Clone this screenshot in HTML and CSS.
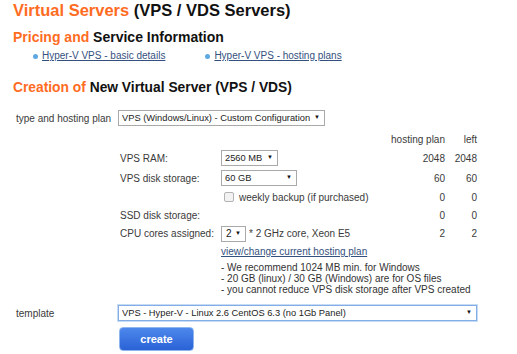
FILE: index.html
```html
<!DOCTYPE html>
<html lang="en">
<head>
    <meta charset="UTF-8">
    <meta name="viewport" content="width=device-width, initial-scale=1.0">
    <title>Virtual Servers</title>
    <link rel="stylesheet" href="styles.css">
</head>
<body>
    <h1 class="page-title"><span class="accent">Virtual Servers</span> (VPS / VDS Servers)</h1>

    <!-- Pricing links -->
    <h2 class="section-title"><span class="accent">Pricing and</span> Service Information</h2>
    <ul class="info-links">
        <li><a href="#">Hyper-V VPS - basic details</a></li>
        <li><a href="#">Hyper-V VPS - hosting plans</a></li>
    </ul>

    <!-- New server form -->
    <h2 class="section-title creation"><span class="accent">Creation of</span> New Virtual Server (VPS / VDS)</h2>

    <form class="vps-form">
        <div class="form-row">
            <label class="row-label" for="plan">type and hosting plan</label>
            <span class="select-wrap plan-select">
                <select id="plan"><option>VPS (Windows/Linux) - Custom Configuration</option></select>
            </span>
        </div>

        <div class="resources">
            <div class="res-row">
                <span></span><span></span>
                <span class="num">hosting plan</span>
                <span class="num">left</span>
            </div>
            <div class="res-row tall">
                <label for="ram">VPS RAM:</label>
                <span><span class="select-wrap ram-select"><select id="ram"><option>2560 MB</option></select></span></span>
                <span class="num">2048</span>
                <span class="num">2048</span>
            </div>
            <div class="res-row tall">
                <label for="disk">VPS disk storage:</label>
                <span><span class="select-wrap disk-select"><select id="disk"><option>60 GB</option></select></span></span>
                <span class="num">60</span>
                <span class="num">60</span>
            </div>
            <div class="res-row">
                <span></span>
                <label class="check"><input type="checkbox"> weekly backup (if purchased)</label>
                <span class="num">0</span>
                <span class="num">0</span>
            </div>
            <div class="res-row">
                <span>SSD disk storage:</span>
                <span></span>
                <span class="num">0</span>
                <span class="num">0</span>
            </div>
            <div class="res-row cpu">
                <label for="cpu">CPU cores assigned:</label>
                <span class="cpu-cell">
                    <span class="select-wrap cpu-select"><select id="cpu"><option>2</option></select></span>
                    <span class="cpu-note">* 2 GHz core, Xeon E5</span>
                </span>
                <span class="num">2</span>
                <span class="num">2</span>
            </div>

            <div class="plan-link"><a href="#">view/change current hosting plan</a></div>
            <div class="notes">
                - We recommend 1024 MB min. for Windows<br>
                - 20 GB (linux) / 30 GB (Windows) are for OS files<br>
                - you cannot reduce VPS disk storage after VPS created
            </div>
        </div>

        <div class="form-row template-row">
            <label class="row-label" for="template">template</label>
            <span class="select-wrap template-select">
                <select id="template"><option>VPS - Hyper-V - Linux 2.6 CentOS 6.3 (no 1Gb Panel)</option></select>
            </span>
        </div>

        <button type="submit" class="create-btn">create</button>
    </form>
</body>
</html>
```

FILE: styles.css
```css
/* Page basics */
body {
    margin: 0;
    padding: 0 13px;
    font-family: "Liberation Sans", Arial, sans-serif;
    font-size: 10px;
    color: #3a3a3a;
    background-color: #fff;
}

.accent {
    color: #ff6c1f;
}

.page-title {
    margin: 0;
    font-size: 16.5px;
    line-height: 20px;
    color: #111;
}

.section-title {
    margin: 8px 0 0;
    font-size: 14px;
    line-height: 18px;
    color: #111;
}

.section-title.creation {
    margin-top: 16px;
    font-size: 13.8px;
}

/* Links under pricing */
.info-links {
    list-style: none;
    display: flex;
    gap: 40px;
    margin: 3px 0 0;
    padding: 0 0 0 20px;
    line-height: 14px;
}

.info-links li::before {
    content: "";
    display: inline-block;
    width: 5px;
    height: 5px;
    margin-right: 4px;
    border-radius: 50%;
    background-color: #5ea8e2;
    vertical-align: middle;
}

a {
    color: #34507e;
    text-decoration: underline;
}

/* Form */
.vps-form {
    margin-top: 13px;
}

.form-row {
    display: flex;
    align-items: center;
}

.row-label {
    width: 105px;
    padding-left: 3px;
    box-sizing: border-box;
}

.select-wrap {
    position: relative;
    display: inline-block;
    vertical-align: middle;
}

.select-wrap::after {
    content: "\25BC";
    position: absolute;
    right: 5px;
    top: 4px;
    font-size: 6px;
    color: #111;
    pointer-events: none;
}

select {
    appearance: none;
    -webkit-appearance: none;
    display: block;
    height: 16px;
    padding: 0 10px 0 3px;
    border: 1px solid #a9a9a9;
    border-radius: 0;
    background-color: #fff;
    font-family: inherit;
    font-size: 9.3px;
    color: #222;
}

.plan-select select { width: 207px; }
.ram-select select { width: 57px; }
.disk-select select { width: 76px; }
.cpu-select select { width: 25px; padding-left: 4px; font-size: 10px; }

/* Resource table */
.resources {
    margin: 4px 0 0 107px;
}

.res-row {
    display: grid;
    grid-template-columns: 101px 154px 70px 32px;
    align-items: center;
    height: 18px;
}

.res-row.tall {
    height: 20px;
}

.res-row.cpu {
    height: 19px;
}

.num {
    text-align: right;
}

.check {
    display: flex;
    align-items: center;
}

.check input {
    appearance: none;
    -webkit-appearance: none;
    width: 10px;
    height: 10px;
    margin: 0 5px 0 3px;
    border: 1px solid #b3b3b3;
    border-radius: 2px;
    background-color: #f2f2f2;
}

.cpu-cell {
    display: flex;
    align-items: center;
}

.cpu-note {
    margin-left: 3px;
}

.plan-link {
    padding-left: 101px;
    line-height: 18px;
}

.notes {
    padding-left: 101px;
    margin-top: 1px;
    line-height: 11px;
    color: #333;
}

.template-row {
    margin-top: 10px;
}

.template-select select {
    width: 359px;
    border-color: #84ade6;
    box-shadow: 0 0 0 1px #c6dbf6;
}

/* Create button */
.create-btn {
    display: block;
    width: 75px;
    height: 24px;
    margin: 6px 0 0 106px;
    border: 1px solid #8fb5ee;
    border-radius: 4px;
    background: linear-gradient(#4d88ec, #2a62d6);
    color: #fff;
    font-family: inherit;
    font-size: 11px;
    font-weight: bold;
    cursor: pointer;
}
```
